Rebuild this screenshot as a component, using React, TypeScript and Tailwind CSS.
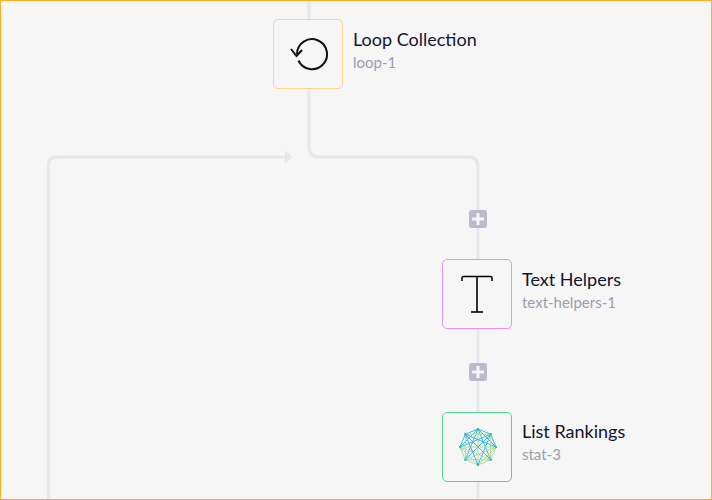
import * as React from 'react';

interface FlowNode {
  id: string;
  title: string;
  subtitle: string;
  border: string;
  left: string;
  top: string;
  pad: string;
  icon: React.ReactNode;
}

function LoopIcon() {
  return (
    <svg width="40" height="40" viewBox="0 0 40 40" fill="none" stroke="#111" strokeWidth="2">
      <path d="M10.4 26.5A15 15 0 1 0 9 20" />
      <path d="M3 15L8.5 22L14 16" />
    </svg>
  );
}

function TextIcon() {
  return (
    <svg width="34" height="40" viewBox="0 0 34 40" fill="none" stroke="#000">
      <path d="M2 7V4Q2 2.5 3.5 2.5H30.5Q32 2.5 32 4V7" strokeWidth="1.5" />
      <path d="M17 2.5V38" strokeWidth="1.6" />
      <path d="M11 38H23" strokeWidth="1.6" />
    </svg>
  );
}

// regular octagon, all chords drawn
const points = [
  [19, 1],
  [31.7, 6.3],
  [37, 19],
  [31.7, 31.7],
  [19, 37],
  [6.3, 31.7],
  [1, 19],
  [6.3, 6.3],
];

function RankingsIcon() {
  const lines: React.ReactNode[] = [];
  points.forEach((a, i) => {
    points.slice(i + 1).forEach((b, j) => {
      const flat = Math.abs(a[0] - b[0]) < 1 || Math.abs(a[1] - b[1]) < 1;
      const lowerEdge = a[1] > 18 && b[1] > 18;
      lines.push(
        <line
          key={`${i}-${j}`}
          x1={a[0]}
          y1={a[1]}
          x2={b[0]}
          y2={b[1]}
          stroke={flat || lowerEdge ? '#a8dd9e' : '#3db7e4'}
          strokeWidth="1"
        />
      );
    });
  });
  return (
    <svg width="38" height="38" viewBox="0 0 38 38" fill="none" className="ml-0.5">
      {lines}
      {points.map((p) => (
        <circle key={`${p[0]}-${p[1]}`} cx={p[0]} cy={p[1]} r="1.2" fill="#35b8b0" />
      ))}
    </svg>
  );
}

const nodes: FlowNode[] = [
  {
    id: 'loop',
    title: 'Loop Collection',
    subtitle: 'loop-1',
    border: 'border-[#ffd588]',
    left: 'left-[272px]',
    top: 'top-[18px]',
    pad: 'pt-[8px]',
    icon: <LoopIcon />,
  },
  {
    id: 'text',
    title: 'Text Helpers',
    subtitle: 'text-helpers-1',
    border: 'border-[#f58fe8]',
    left: 'left-[441px]',
    top: 'top-[258px]',
    pad: 'pt-[8px]',
    icon: <TextIcon />,
  },
  {
    id: 'stat',
    title: 'List Rankings',
    subtitle: 'stat-3',
    border: 'border-[#4fd49a]',
    left: 'left-[441px]',
    top: 'top-[411px]',
    pad: 'pt-[7px]',
    icon: <RankingsIcon />,
  },
];

function PlusButton({ className }: { className: string }) {
  return (
    <div className={`absolute flex h-[18px] w-[18px] items-center justify-center rounded-[3px] bg-[#babac8] ${className}`}>
      <svg width="12" height="12" viewBox="0 0 12 12" stroke="#f6f6f6" strokeWidth="3">
        <path d="M6 0V12M0 6H12" />
      </svg>
    </div>
  );
}

export default function App() {
  return (
    <div
      className="relative h-[500px] w-[712px] overflow-hidden border border-[#ffb020] bg-[#f6f6f6]"
      style={{ fontFamily: 'Lato, "Noto Sans", sans-serif' }}
    >
      {/* Edges */}
      <svg className="absolute left-[-1px] top-[-1px]" width="712" height="500" fill="none" stroke="#e7e7eb" strokeWidth="3">
        <path d="M309 0V147Q309 157 319 157H468Q478 157 478 167V500" />
        <path d="M48.5 500V165Q48.5 157 57 157H286" />
        <path d="M285 150.5L292.5 157L285 163.5Z" fill="#e7e7eb" stroke="none" />
      </svg>

      <PlusButton className="left-[468px] top-[209px]" />
      <PlusButton className="left-[468px] top-[362px]" />

      {nodes.map((node) => (
        <div key={node.id} className={`absolute flex items-start gap-[10px] ${node.left} ${node.top}`}>
          <div className={`flex h-[70px] w-[70px] items-center justify-center rounded-[5px] border bg-[#f6f6f6] ${node.border}`}>
            {node.icon}
          </div>
          <div className={`whitespace-nowrap ${node.pad}`}>
            <p className="text-[18px] leading-[24px] font-normal text-[#14142e]">{node.title}</p>
            <p className="mt-px text-[15px] leading-[20px] text-[#9c9cb0]">{node.subtitle}</p>
          </div>
        </div>
      ))}
    </div>
  );
}
